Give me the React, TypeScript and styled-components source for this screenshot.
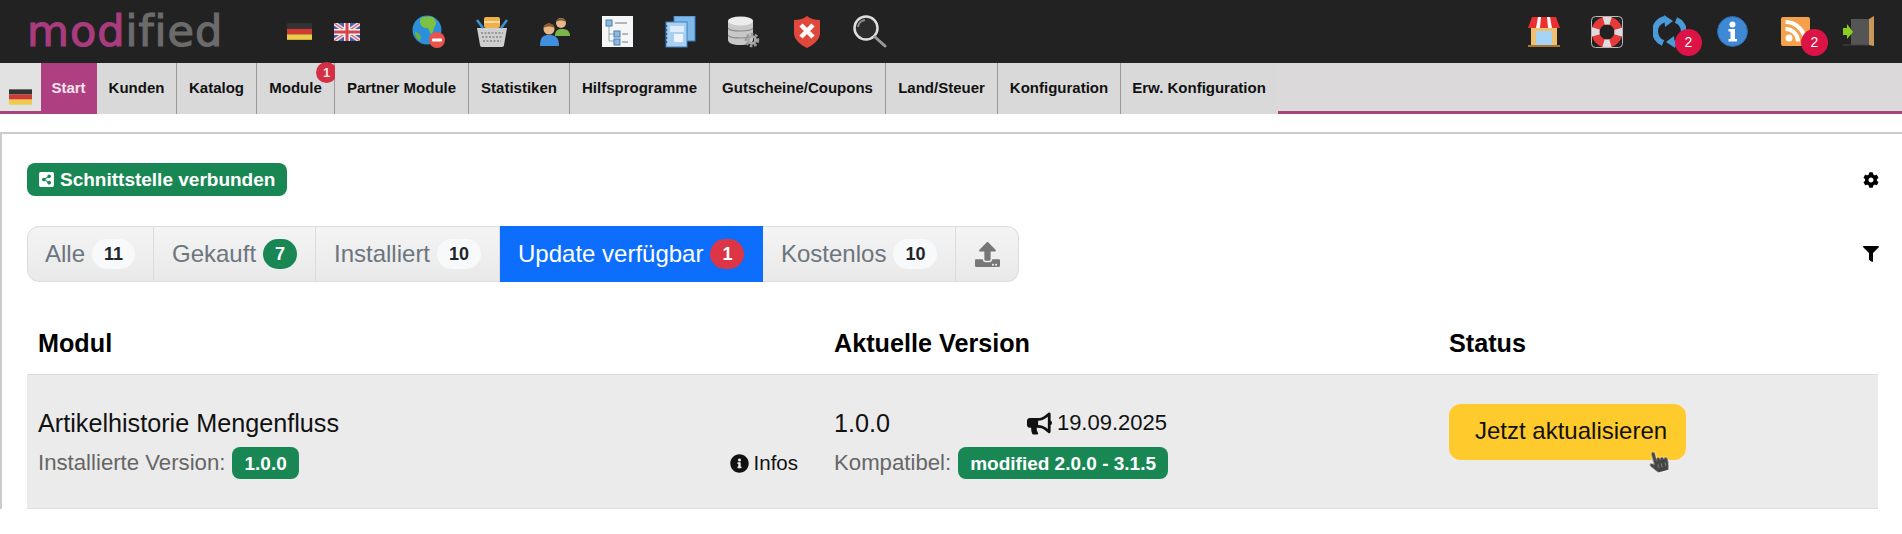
import React from 'react';
import styled, { createGlobalStyle } from 'styled-components';
import { FaBullhorn, FaCog, FaFilter, FaHandPointer, FaInfoCircle, FaShareAltSquare, FaUpload } from 'react-icons/fa';

const GlobalStyle = createGlobalStyle`
    html, body {
        margin: 0;
        padding: 0;
        height: 534px;
        overflow: hidden;
        background: #fff;
        font-family: "Liberation Sans", Arial, sans-serif;
    }
`;

const TopBar = styled.header`
    display: flex;
    align-items: center;
    height: 63px;
    padding-right: 12px;
    background-color: #222;
`;

const Logo = styled.div`
    flex: 0 0 275px;
    box-sizing: border-box;
    padding-left: 27px;
    font-family: "DejaVu Sans", sans-serif;
    font-size: 43px;
    line-height: 63px;
    letter-spacing: 1px;
    color: #6b6b6b;
    -webkit-text-stroke: 1.2px #6b6b6b;

    span {
        color: #a83c7e;
        -webkit-text-stroke: 1.2px #a83c7e;
    }
`;

const FlagSlot = styled.div`
    display: flex;
    align-items: center;
    justify-content: center;
    flex: 0 0 48px;
`;

const IconGroup = styled.div<{ $right?: boolean }>`
    display: flex;
    align-items: center;
    margin-left: ${(p) => (p.$right ? 'auto' : '26px')};
`;

const IconSlot = styled.div`
    position: relative;
    display: flex;
    align-items: center;
    justify-content: center;
    width: 63px;
    height: 63px;
`;

const CountBubble = styled.span`
    position: absolute;
    top: 29px;
    left: 37px;
    width: 27px;
    height: 27px;
    border-radius: 50%;
    background-color: #dc1446;
    color: #fff;
    font-size: 14px;
    line-height: 27px;
    text-align: center;
`;

const Nav = styled.nav`
    display: flex;
    height: 51px;
    background-color: #dbd9da;
`;

const NavFlag = styled.div`
    flex: 0 0 41px;
    box-sizing: border-box;
    display: flex;
    align-items: flex-end;
    justify-content: center;
    padding-bottom: 6px;
    background-color: #e2e2e2;
    border-bottom: 3px solid #a8457c;
`;

const NavItem = styled.a<{ $active?: boolean; $width: number }>`
    position: relative;
    flex: 0 0 ${(p) => p.$width}px;
    box-sizing: border-box;
    display: flex;
    align-items: center;
    justify-content: center;
    height: 51px;
    padding-bottom: 2px;
    font-size: 15px;
    font-weight: 700;
    color: ${(p) => (p.$active ? '#f4e4ee' : '#111')};
    background-color: ${(p) => (p.$active ? '#ae3f80' : '#d9d9d9')};
    border-right: 1px solid ${(p) => (p.$active ? '#ae3f80' : '#999')};

    &:nth-last-child(2) {
        border-right-color: #d9d9d9;
    }
`;

const NavBadge = styled.span`
    position: absolute;
    top: -1px;
    right: -3px;
    width: 21px;
    height: 21px;
    border-radius: 50%;
    background-color: #d32f45;
    color: #f6e6e6;
    font-size: 13px;
    line-height: 21px;
    text-align: center;
`;

const NavRest = styled.div`
    flex: 1;
    border-bottom: 3px solid #a8457c;
`;

const Card = styled.main`
    margin-top: 18px;
    padding: 29px 24px 0 25px;
    border-top: 2px solid #ccc;
    border-left: 2px solid #ccc;
`;

const TopRow = styled.div`
    display: flex;
    align-items: center;
    justify-content: space-between;
    height: 33px;
`;

const StatusPill = styled.span`
    display: inline-flex;
    align-items: center;
    gap: 5px;
    box-sizing: border-box;
    width: 260px;
    height: 33px;
    padding-left: 11px;
    border-radius: 8px;
    background-color: #198754;
    color: #fff;
    font-size: 19px;
    font-weight: 700;
`;

const ToolIcon = styled.span`
    display: flex;
    margin-right: -1px;
    font-size: 16px;
    color: #000;
`;

const TabRow = styled.div`
    display: flex;
    align-items: center;
    justify-content: space-between;
    margin-top: 30px;
`;

const Tabs = styled.div`
    display: flex;
    height: 56px;
`;

const Tab = styled.a<{ $active?: boolean; $width: number }>`
    flex: 0 0 ${(p) => p.$width}px;
    box-sizing: border-box;
    display: flex;
    align-items: center;
    gap: 7px;
    padding-left: 18px;
    font-size: 24px;
    color: ${(p) => (p.$active ? '#fff' : '#6c757d')};
    background: ${(p) => (p.$active ? '#0d6efd' : 'linear-gradient(#f4f4f4, #e9e9e9)')};
    border: ${(p) => (p.$active ? '0' : '1px solid #dcdcdc')};
    border-left: 0;

    &:first-child {
        padding-left: 17px;
        border-left: 1px solid #dcdcdc;
        border-radius: 12px 0 0 12px;
    }

    &:last-child {
        justify-content: center;
        padding-left: 0;
        border-radius: 0 12px 12px 0;
        font-size: 25px;
        color: #777;
    }
`;

const Count = styled.span<{ $tone?: 'light' | 'green' | 'red' }>`
    box-sizing: border-box;
    height: 30px;
    padding: 0 12px;
    border-radius: 15px;
    font-size: 18px;
    font-weight: 700;
    line-height: 31px;
    color: ${(p) => (p.$tone && p.$tone !== 'light' ? '#fff' : '#212529')};
    background-color: ${(p) => (p.$tone === 'green' ? '#198754' : p.$tone === 'red' ? '#dc3545' : '#f8f9fa')};
`;

const TableGrid = styled.div`
    display: grid;
    grid-template-columns: 796px 615px 440px;
`;

const HeadCell = styled.div`
    height: 93px;
    box-sizing: border-box;
    padding: 43px 0 0 11px;
    border-bottom: 1px solid #dcdcdc;
    font-size: 25.2px;
    font-weight: 700;
    line-height: 36px;
    color: #000;
`;

const RowCell = styled.div`
    height: 134px;
    box-sizing: border-box;
    padding: 32px 0 0 11px;
    background-color: #ebebeb;
    border-bottom: 1px solid #dedede;
    color: #111;
`;

const Title = styled.div`
    font-size: 25.2px;
    line-height: 32px;
`;

const MetaRow = styled.div`
    display: flex;
    align-items: center;
    margin-top: 8px;
    height: 32px;
    font-size: 22.2px;
    color: #666;
`;

const VersionBadge = styled.span`
    margin-left: 7px;
    padding: 0 12px;
    height: 32px;
    border-radius: 8px;
    background-color: #198754;
    color: #fff;
    font-size: 19px;
    font-weight: 700;
    line-height: 33px;
`;

const InfoLink = styled.a`
    display: flex;
    align-items: center;
    gap: 5px;
    margin-left: auto;
    margin-right: 25px;
    font-size: 20.5px;
    color: #111;
`;

const VersionLine = styled.div`
    display: flex;
    align-items: center;
    justify-content: space-between;
    width: 333px;
    height: 32px;
    font-size: 25.2px;
`;

const DateInfo = styled.span`
    display: flex;
    align-items: center;
    gap: 5px;
    font-size: 22px;
`;

const UpdateButton = styled.button`
    position: relative;
    display: block;
    box-sizing: border-box;
    width: 237px;
    height: 56px;
    margin-top: -3px;
    padding: 0 0 2px 26px;
    border: 0;
    border-radius: 12px;
    background-color: #ffca2c;
    color: #111;
    font-family: inherit;
    font-size: 24px;
    text-align: left;
`;

const Pointer = styled.span`
    position: absolute;
    left: 199px;
    top: 47px;
    display: flex;
    font-size: 21px;
    color: #444;
    transform: rotate(-15deg);
    filter: drop-shadow(0 0 1px #fff);
`;

function GermanFlag({ width, height }: { width: number; height: number }) {
    return (
        <svg width={width} height={height} viewBox="0 0 24 16">
            <rect width="24" height="5.4" fill="#333" />
            <rect y="5.4" width="24" height="5.3" fill="#cf3a32" />
            <rect y="10.7" width="24" height="5.3" fill="#eec94a" />
        </svg>
    );
}

function BritishFlag() {
    return (
        <svg width="26" height="18" viewBox="0 0 26 18">
            <rect width="26" height="18" fill="#4d5fa8" />
            <path d="M0 0L26 18M26 0L0 18" stroke="#eee" strokeWidth="4" />
            <path d="M0 0L26 18M26 0L0 18" stroke="#d6646e" strokeWidth="1.4" />
            <path d="M13 0V18M0 9H26" stroke="#eee" strokeWidth="6" />
            <path d="M13 0V18M0 9H26" stroke="#d6444e" strokeWidth="3" />
        </svg>
    );
}

function GlobeIcon() {
    return (
        <svg width="34" height="34" viewBox="0 0 34 34">
            <circle cx="15" cy="15" r="14.5" fill="#2b8fdc" />
            <path d="M8 4c4-3 10-3 14-1 2 3 3 6 1 8-2 3-1 6-4 8-2-2-1-5-4-6-4 0-6-2-7-5z" fill="#7cc142" />
            <path d="M3 17c3 0 5 2 6 5l-1 4c-3-2-5-5-5-9z" fill="#6bb238" />
            <circle cx="25" cy="25" r="8" fill="#e8544c" />
            <rect x="20" y="23.5" width="10" height="3" rx="1" fill="#fff" />
        </svg>
    );
}

function BasketIcon() {
    return (
        <svg width="32" height="32" viewBox="0 0 32 32">
            <rect x="8" y="1" width="16" height="11" rx="2" fill="#eeb04a" />
            <rect x="8" y="5" width="16" height="2" fill="#f8dc9a" />
            <path d="M1 12H31L28 29a2 2 0 0 1-2 2H6a2 2 0 0 1-2-2z" fill="#cfcfcf" />
            <path d="M5 17H27M6 21H26M7 25H25" stroke="#888" strokeWidth="1.5" strokeDasharray="2 1.5" />
            <path d="M1 4L7 12M31 4L25 12" stroke="#3d93d8" strokeWidth="2.5" />
        </svg>
    );
}

function UsersIcon() {
    return (
        <svg width="30" height="30" viewBox="0 0 30 30">
            <path d="M15 19c0-6 3-7 7-7s8 1 8 7z" fill="#7ab648" />
            <circle cx="21" cy="6" r="5" fill="#e8b888" />
            <path d="M16 5c1-5 9-5 10 0-3-2-7-2-10 0z" fill="#7a5a30" />
            <path d="M0 29c0-9 3-11 9-11s10 2 10 11z" fill="#3f8fdc" />
            <circle cx="9" cy="12" r="5.5" fill="#e8b888" />
            <path d="M3.5 11c0-6 11-6 11 0-3-2-8-2-11 0z" fill="#8a5a2a" />
        </svg>
    );
}

function TreeIcon() {
    return (
        <svg width="31" height="31" viewBox="0 0 31 31">
            <rect width="31" height="31" fill="#f4f6f8" />
            <path d="M7 10V25H12M7 18H12" stroke="#8aa" fill="none" />
            <rect x="4" y="4" width="6" height="6" fill="#8fb8e0" stroke="#4a7ab0" />
            <rect x="12" y="15" width="6" height="6" fill="#8fb8e0" stroke="#4a7ab0" />
            <rect x="12" y="23" width="6" height="6" fill="#8fb8e0" stroke="#4a7ab0" />
            <path d="M13 7H25M20 18H26M20 26H26" stroke="#777" />
        </svg>
    );
}

function NotesIcon() {
    return (
        <svg width="31" height="32" viewBox="0 0 31 32">
            <rect x="9" y="0" width="21" height="25" fill="#7db8e8" stroke="#3d80c0" />
            <rect x="1" y="6" width="21" height="25" fill="#a9d0f0" stroke="#3d80c0" />
            <rect x="5" y="10" width="14" height="6" fill="#dcecf8" />
            <rect x="9" y="18" width="9" height="8" fill="#eef4fa" />
            <path d="M1 9v20" stroke="#2a5a90" strokeWidth="2.5" strokeDasharray="2 2" />
        </svg>
    );
}

function DatabaseIcon() {
    return (
        <svg width="32" height="32" viewBox="0 0 32 32">
            <path d="M0 5V24c0 3 5 5 12 5s13-2 13-5V5z" fill="#c8c8c8" />
            <ellipse cx="12.5" cy="5" rx="12.5" ry="4.5" fill="#ececec" />
            <path d="M0 12c2 4 23 4 25 0M0 19c2 4 23 4 25 0" stroke="#888" strokeWidth="1.2" fill="none" />
            <circle cx="24" cy="24" r="5.5" fill="none" stroke="#999" strokeWidth="3.5" strokeDasharray="2.5 1.5" />
            <circle cx="24" cy="24" r="3.5" fill="none" stroke="#aaa" strokeWidth="2.5" />
        </svg>
    );
}

function ShieldIcon() {
    return (
        <svg width="26" height="32" viewBox="0 0 26 32">
            <path d="M13 0C9 3 5 4 0 4V17C0 24 7 29 13 32 19 29 26 24 26 17V4C21 4 17 3 13 0z" fill="#e0483c" />
            <path d="M7 9L19 21M19 9L7 21" stroke="#fff" strokeWidth="4.5" />
        </svg>
    );
}

function SearchIcon() {
    return (
        <svg width="34" height="33" viewBox="0 0 34 33">
            <circle cx="13" cy="13" r="11.5" fill="#2c2c2c" stroke="#dedede" strokeWidth="2.5" />
            <path d="M5 12a8 8 0 0 1 7-7" stroke="#8a8a8a" strokeWidth="2" fill="none" />
            <path d="M22 22L32 31" stroke="#9a9a9a" strokeWidth="3" strokeLinecap="round" />
        </svg>
    );
}

function ShopIcon() {
    return (
        <svg width="32" height="30" viewBox="0 0 32 30">
            <rect x="3" y="10" width="26" height="18" fill="#eec070" />
            <rect x="8" y="14" width="16" height="14" fill="#a5d4f4" />
            <rect x="0" y="28" width="32" height="2" fill="#a87830" />
            <path d="M4 0H28L32 11H0z" fill="#e83030" />
            <path d="M10 0H13L12 11H8zM19 0H22L24 11H20z" fill="#f6f6f6" />
        </svg>
    );
}

function RingIcon() {
    return (
        <svg width="32" height="32" viewBox="0 0 32 32">
            <rect x="0.5" y="0.5" width="31" height="31" rx="4" fill="none" stroke="#bbb" />
            <circle cx="16" cy="16" r="11.5" fill="none" stroke="#e63a3a" strokeWidth="8" />
            <circle cx="16" cy="16" r="11.5" fill="none" stroke="#ddd" strokeWidth="8" strokeDasharray="7 11" strokeDashoffset="3.5" />
        </svg>
    );
}

function SyncIcon() {
    return (
        <svg width="33" height="33" viewBox="0 0 33 33">
            <path d="M12 4C5 6 2 11 2 16c0 5 3 10 8 12" stroke="#4a9ad8" strokeWidth="6" fill="none" />
            <path d="M11 0L20 6 12 12z" fill="#4a9ad8" />
            <path d="M21 29c7-2 10-7 10-12 0-5-3-10-8-12" stroke="#4a9ad8" strokeWidth="6" fill="none" />
            <path d="M22 33L13 27 21 21z" fill="#4a9ad8" />
        </svg>
    );
}

function InfoIcon() {
    return (
        <svg width="31" height="31" viewBox="0 0 31 31">
            <circle cx="15.5" cy="15.5" r="15" fill="#3f88d4" stroke="#2a6ab0" />
            <circle cx="15.5" cy="8.5" r="3" fill="#fff" />
            <path d="M11.5 13H18V23H20V25.5H11.5V23H13.5V15.5H11.5z" fill="#fff" />
        </svg>
    );
}

function RssIcon() {
    return (
        <svg width="29" height="29" viewBox="0 0 29 29">
            <rect width="29" height="29" rx="2" fill="#f5a04a" />
            <circle cx="8" cy="21" r="3.5" fill="#fff" />
            <path d="M4.5 12A12.5 12.5 0 0 1 17 24.5M4.5 5A19.5 19.5 0 0 1 24 24.5" stroke="#fff" strokeWidth="4" fill="none" />
        </svg>
    );
}

function DoorIcon() {
    return (
        <svg width="33" height="32" viewBox="0 0 33 32">
            <rect x="9" y="3" width="20" height="26" fill="#555" />
            <path d="M27 3L32 0V30L27 29z" fill="#c89858" />
            <path d="M1 29H27" stroke="#444" />
            <path d="M1 12H5V8L11 16L5 23V19H1z" fill="#8ccf1e" />
        </svg>
    );
}

const navItems = [
    { label: 'Kunden', width: 80 },
    { label: 'Katalog', width: 80 },
    { label: 'Module', width: 78, badge: '1' },
    { label: 'Partner Module', width: 134 },
    { label: 'Statistiken', width: 101 },
    { label: 'Hilfsprogramme', width: 140 },
    { label: 'Gutscheine/Coupons', width: 176 },
    { label: 'Land/Steuer', width: 112 },
    { label: 'Konfiguration', width: 123 },
    { label: 'Erw. Konfiguration', width: 157 },
];

export default function App() {
    return (
        <>
            <GlobalStyle />
            <TopBar>
                <Logo>
                    <span>mod</span>ified
                </Logo>
                <FlagSlot><GermanFlag width={25} height={17} /></FlagSlot>
                <FlagSlot><BritishFlag /></FlagSlot>
                <IconGroup>
                    <IconSlot><GlobeIcon /></IconSlot>
                    <IconSlot><BasketIcon /></IconSlot>
                    <IconSlot><UsersIcon /></IconSlot>
                    <IconSlot><TreeIcon /></IconSlot>
                    <IconSlot><NotesIcon /></IconSlot>
                    <IconSlot><DatabaseIcon /></IconSlot>
                    <IconSlot><ShieldIcon /></IconSlot>
                    <IconSlot><SearchIcon /></IconSlot>
                </IconGroup>
                <IconGroup $right>
                    <IconSlot><ShopIcon /></IconSlot>
                    <IconSlot><RingIcon /></IconSlot>
                    <IconSlot><SyncIcon /><CountBubble>2</CountBubble></IconSlot>
                    <IconSlot><InfoIcon /></IconSlot>
                    <IconSlot><RssIcon /><CountBubble>2</CountBubble></IconSlot>
                    <IconSlot><DoorIcon /></IconSlot>
                </IconGroup>
            </TopBar>
            <Nav>
                <NavFlag><GermanFlag width={23} height={16} /></NavFlag>
                <NavItem $active $width={56}>Start</NavItem>
                {navItems.map((item) => (
                    <NavItem key={item.label} $width={item.width}>
                        {item.label}
                        {item.badge && <NavBadge>{item.badge}</NavBadge>}
                    </NavItem>
                ))}
                <NavRest />
            </Nav>
            <Card>
                <TopRow>
                    <StatusPill><FaShareAltSquare size={17} /> Schnittstelle verbunden</StatusPill>
                    <ToolIcon><FaCog /></ToolIcon>
                </TopRow>
                <TabRow>
                    <Tabs>
                        <Tab $width={127}>Alle <Count>11</Count></Tab>
                        <Tab $width={162}>Gekauft <Count $tone="green">7</Count></Tab>
                        <Tab $width={184}>Installiert <Count>10</Count></Tab>
                        <Tab $active $width={263}>Update verfügbar <Count $tone="red">1</Count></Tab>
                        <Tab $width={193}>Kostenlos <Count>10</Count></Tab>
                        <Tab $width={63}><FaUpload /></Tab>
                    </Tabs>
                    <ToolIcon><FaFilter /></ToolIcon>
                </TabRow>
                <TableGrid>
                    <HeadCell>Modul</HeadCell>
                    <HeadCell>Aktuelle Version</HeadCell>
                    <HeadCell>Status</HeadCell>
                    <RowCell>
                        <Title>Artikelhistorie Mengenfluss</Title>
                        <MetaRow>
                            Installierte Version: <VersionBadge>1.0.0</VersionBadge>
                            <InfoLink><FaInfoCircle size={19} /> Infos</InfoLink>
                        </MetaRow>
                    </RowCell>
                    <RowCell>
                        <VersionLine>
                            1.0.0
                            <DateInfo><FaBullhorn size={25} /> 19.09.2025</DateInfo>
                        </VersionLine>
                        <MetaRow>
                            Kompatibel: <VersionBadge>modified 2.0.0 - 3.1.5</VersionBadge>
                        </MetaRow>
                    </RowCell>
                    <RowCell>
                        <UpdateButton>
                            Jetzt aktualisieren
                            <Pointer><FaHandPointer /></Pointer>
                        </UpdateButton>
                    </RowCell>
                </TableGrid>
            </Card>
        </>
    );
}
